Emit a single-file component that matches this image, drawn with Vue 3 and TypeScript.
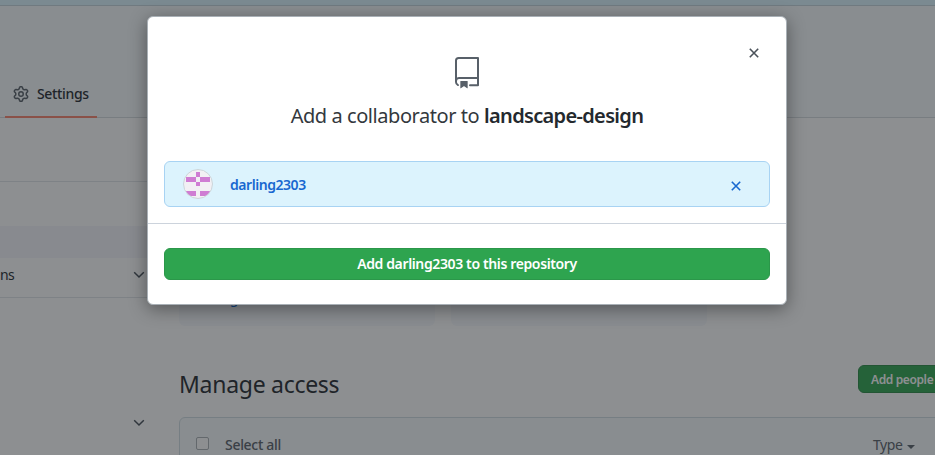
<script setup lang="ts">
interface Pixel {
  x: number
  y: number
  w: number
  h: number
}

const username = 'darling2303'
const repository = 'landscape-design'

const avatarPixels: Pixel[] = [
  { x: 13, y: 3, w: 4, h: 5 },
  { x: 3, y: 8, w: 10, h: 5 },
  { x: 17, y: 8, w: 10, h: 5 },
  { x: 13, y: 13, w: 4, h: 4 },
  { x: 3, y: 22, w: 10, h: 5 },
  { x: 17, y: 22, w: 10, h: 5 },
]
</script>

<template>
  <div class="page">
    <div class="notice"></div>
    <nav class="repo-nav">
      <a class="tab">
        <svg class="gear" viewBox="0 0 16 16" width="16" height="16">
          <path fill-rule="evenodd" d="M7.429 1.525a6.593 6.593 0 011.142 0c.036.003.108.036.137.146l.289 1.105c.147.56.55.967.997 1.189.174.086.341.183.501.29.417.278.97.423 1.53.27l1.102-.303c.11-.03.175.016.195.046.219.31.41.641.573.989.014.031.022.11-.059.19l-.815.806c-.411.406-.562.957-.53 1.456a4.588 4.588 0 010 .582c-.032.499.119 1.05.53 1.456l.815.806c.08.08.073.159.059.19a6.494 6.494 0 01-.573.99c-.02.029-.086.074-.195.045l-1.103-.303c-.559-.153-1.112-.008-1.529.27-.16.107-.327.204-.5.29-.449.222-.851.628-.998 1.189l-.289 1.105c-.029.11-.101.143-.137.146a6.613 6.613 0 01-1.142 0c-.036-.003-.108-.037-.137-.146l-.289-1.105c-.147-.56-.55-.967-.997-1.189a4.502 4.502 0 01-.501-.29c-.417-.278-.97-.423-1.53-.27l-1.102.303c-.11.03-.175-.016-.195-.046a6.492 6.492 0 01-.573-.989c-.014-.031-.022-.11.059-.19l.815-.806c.411-.406.562-.957.53-1.456a4.587 4.587 0 010-.582c.032-.499-.119-1.05-.53-1.456l-.815-.806c-.08-.08-.073-.159-.059-.19a6.44 6.44 0 01.573-.99c.02-.029.086-.075.195-.045l1.103.303c.559.153 1.112.008 1.529-.27.16-.107.327-.204.5-.29.449-.222.851-.628.998-1.189l.289-1.105c.029-.11.101-.143.137-.146zM8 0c-.236 0-.47.01-.701.03-.743.065-1.29.615-1.458 1.261l-.29 1.106c-.017.066-.078.158-.211.224a5.994 5.994 0 00-.668.386c-.123.082-.233.09-.3.071L3.27 2.776c-.644-.177-1.392.02-1.82.63a7.977 7.977 0 00-.704 1.217c-.315.675-.111 1.422.363 1.891l.815.806c.05.048.098.147.088.294a6.084 6.084 0 000 .772c.01.147-.038.246-.088.294l-.815.806c-.474.469-.678 1.216-.363 1.891.2.428.436.835.704 1.218.428.609 1.176.806 1.82.63l1.103-.303c.066-.019.176-.011.299.071.213.143.436.272.668.386.133.066.194.158.212.224l.289 1.106c.169.646.715 1.196 1.458 1.26a8.094 8.094 0 001.402 0c.743-.064 1.29-.614 1.458-1.26l.29-1.106c.017-.066.078-.158.211-.224a5.98 5.98 0 00.668-.386c.123-.082.233-.09.3-.071l1.102.302c.644.177 1.392-.02 1.82-.63.268-.382.505-.789.704-1.217.315-.675.111-1.422-.364-1.891l-.814-.806c-.05-.048-.098-.147-.088-.294a6.1 6.1 0 000-.772c-.01-.147.039-.246.088-.294l.814-.806c.475-.469.679-1.216.364-1.891a7.992 7.992 0 00-.704-1.218c-.428-.609-1.176-.806-1.82-.63l-1.103.303c-.066.019-.176.011-.299-.071a5.991 5.991 0 00-.668-.386c-.133-.066-.194-.158-.212-.224L10.16 1.29C9.99.645 9.444.095 8.701.031A8.094 8.094 0 008 0zm1.5 8a1.5 1.5 0 11-3 0 1.5 1.5 0 013 0zM11 8a3 3 0 11-6 0 3 3 0 016 0z" />
        </svg>
        <span>Settings</span>
      </a>
    </nav>

    <div class="columns">
      <aside class="sidebar">
        <div class="side-gap"></div>
        <div class="side-plain"></div>
        <div class="side-active"></div>
        <div class="side-row side-first">
          <span>ns</span>
          <svg class="chevron" viewBox="0 0 12 8" width="12" height="8"><path d="M1.2 1.2 6 6 10.8 1.2" /></svg>
        </div>
        <div class="side-row side-second">
          <svg class="chevron" viewBox="0 0 12 8" width="12" height="8"><path d="M1.2 1.2 6 6 10.8 1.2" /></svg>
        </div>
      </aside>

      <main class="content">
        <div class="cards">
          <div class="card"><span>Manage</span></div>
          <div class="card"></div>
        </div>
        <div class="heading">
          <h2><span>Manage access</span></h2>
          <button class="people"><span>Add people</span></button>
        </div>
        <div class="list-head">
          <i class="checkbox"></i>
          <span class="select-all">Select all</span>
          <span class="type">Type</span>
          <i class="caret"></i>
        </div>
      </main>
    </div>

    <div class="backdrop">
      <section class="dialog">
        <header class="dialog-head">
          <svg class="close" viewBox="0 0 10 10" width="10" height="10"><path d="M.8.8 9.2 9.2M9.2.8.8 9.2" /></svg>
          <svg class="repo" viewBox="0 0 24 24" width="32" height="32">
            <path fill-rule="evenodd" d="M3 2.75A2.75 2.75 0 015.75 0h14.5a.75.75 0 01.75.75v20.5a.75.75 0 01-.75.75h-6a.75.75 0 010-1.500h5.250v-4H6A1.500 1.500 0 004.500 18v.750c0 .716.430 1.334 1.050 1.605a.750.750 0 01-.600 1.374A3.250 3.250 0 013 18.750v-16zM19.500 1.500V15H6c-.546 0-1.059.146-1.500.401V2.750c0-.690.560-1.250 1.250-1.250H19.500z" />
            <path d="M7 18.250a.250.250 0 01.250-.250h5a.250.250 0 01.250.250v5.010a.250.250 0 01-.397.201l-2.206-1.604a.250.250 0 00-.294 0L7.397 23.460a.250.250 0 01-.397-.200v-5.010z" />
          </svg>
          <h1><span class="title-text">Add a collaborator to </span><strong>{{ repository }}</strong></h1>
        </header>
        <div class="member">
          <svg class="avatar" viewBox="0 0 30 30" width="30" height="30">
            <clipPath id="avatar-round"><circle cx="15" cy="15" r="14.500" /></clipPath>
            <circle cx="15" cy="15" r="14.500" fill="#f2f0f4" />
            <g clip-path="url(#avatar-round)" fill="#cf7dd3">
              <rect v-for="(p, i) in avatarPixels" :key="i" :x="p.x" :y="p.y" :width="p.w" :height="p.h" />
            </g>
            <circle cx="15" cy="15" r="14.500" fill="none" stroke="#cbd5da" />
          </svg>
          <span class="name">{{ username }}</span>
          <svg class="remove" viewBox="0 0 10 10" width="10" height="10"><path d="M.8.8 9.2 9.2M9.2.8.8 9.2" /></svg>
        </div>
        <footer class="dialog-foot">
          <button class="submit"><span>Add {{ username }} to this repository</span></button>
        </footer>
      </section>
    </div>
  </div>
</template>

<style>
body {
  overflow: hidden;
}
</style>

<style scoped>
* {
  box-sizing: border-box;
}
.page {
  position: relative;
  width: 935px;
  height: 455px;
  overflow: hidden;
  background: #fff;
  color: #24292e;
  font: 14px/20px "Noto Sans", sans-serif;
  display: flex;
  flex-direction: column;
}
span {
  white-space: nowrap;
}
.notice {
  height: 6px;
  flex: none;
  background: #dbf4ff;
  border-bottom: 1px solid #c4d4dc;
}
.repo-nav {
  height: 112px;
  flex: none;
  display: flex;
  align-items: flex-end;
  padding-left: 5px;
  background: #f6fafc;
  border-bottom: 1px solid #d5dade;
}
.tab {
  width: 92px;
  height: 46px;
  margin-bottom: -1px;
  padding: 0 0 0 8px;
  display: flex;
  align-items: center;
  gap: 8px;
  border-bottom: 2px solid #f9826c;
  font-weight: 500;
  letter-spacing: -0.35px;
}
.gear {
  fill: #586069;
}
.columns {
  flex: 1;
  display: flex;
  min-height: 0;
}
.sidebar {
  width: 155px;
  flex: none;
}
.side-gap {
  height: 64px;
  border-bottom: 1px solid #e1e4e8;
}
.side-plain {
  height: 44px;
}
.side-active {
  height: 32px;
  background: #f5f5fa;
}
.side-row {
  display: flex;
  align-items: center;
  padding-right: 10px;
}
.side-first {
  height: 40px;
  padding-bottom: 5px;
  border-bottom: 1px solid #e1e4e8;
}
.side-first span {
  letter-spacing: -0.6px;
}
.side-second {
  height: 249px;
}
.chevron {
  margin-left: auto;
  fill: none;
  stroke: #444d56;
  stroke-width: 1.5;
}
.content {
  width: 820px;
  flex: none;
  margin-left: 24px;
}
.cards {
  display: flex;
  gap: 16px;
  height: 208px;
}
.card {
  width: 256px;
  display: flex;
  align-items: flex-end;
  padding: 0 16px 18px;
  background: #f6f8fc;
  border-radius: 6px;
  color: #0366d6;
  letter-spacing: -0.6px;
}
.heading {
  height: 91px;
  display: flex;
  padding-top: 39px;
}
h2 {
  width: 679px;
  margin: -1px 0 0;
  font-size: 23px;
  line-height: 40px;
  font-weight: 400;
  letter-spacing: -0.28px;
}
.people {
  width: 110px;
  height: 28px;
  padding: 1px 0 0 12px;
  text-align: left;
  border: 1px solid #2a8a45;
  border-radius: 6px;
  background: #2ea44f;
  color: #fff;
  font: 600 12px/25px "Noto Sans", sans-serif;
  letter-spacing: -0.38px;
}
.list-head {
  height: 60px;
  display: flex;
  align-items: center;
  padding: 0 0 4px 16px;
  background: #f6fafc;
  border: 1px solid #d1dde3;
  border-radius: 6px 6px 0 0;
  color: #586069;
}
.checkbox {
  width: 13px;
  height: 13px;
  margin: -4px 16px 0 0;
  border: 1px solid #aab0b5;
  border-radius: 2px;
  background: #fff;
}
.select-all {
  width: 648px;
  font-weight: 500;
  letter-spacing: -0.3px;
}
.type {
  letter-spacing: -0.4px;
}
.caret {
  margin: 3px 0 0 4px;
  border: 4px solid transparent;
  border-top-color: #586069;
  border-bottom: 0;
}
.backdrop {
  position: absolute;
  inset: 0;
  padding: 16px 0 0 147px;
  background: rgba(27, 31, 35, 0.5);
}
.dialog {
  width: 640px;
  height: 289px;
  display: flex;
  flex-direction: column;
  background: #fff;
  border: 1px solid #a9b0b6;
  border-radius: 6px;
  box-shadow: 0 4px 18px rgba(0, 0, 0, 0.4);
}
.dialog-head {
  position: relative;
  height: 144px;
  flex: none;
  padding-top: 40px;
  display: flex;
  flex-direction: column;
  align-items: center;
}
.close {
  position: absolute;
  top: 31px;
  right: 27px;
  stroke: #4b525a;
  stroke-width: 1.6;
}
.repo {
  fill: #586069;
}
h1 {
  margin: 12px 0 0;
  font-size: 20px;
  line-height: 30px;
  font-weight: 400;
  white-space: nowrap;
}
.title-text {
  white-space: pre;
  color: #33383d;
  letter-spacing: -0.44px;
}
strong {
  font-weight: 600;
  letter-spacing: -0.66px;
}
.member {
  height: 46px;
  flex: none;
  margin: 0 16px;
  padding: 0 28px 0 18px;
  display: flex;
  align-items: center;
  background: #dcf3fd;
  border: 1px solid #a8d3f3;
  border-radius: 6px;
}
.avatar {
  margin-right: 17px;
}
.name {
  margin-top: 2px;
  color: #1868d0;
  font-weight: 600;
  letter-spacing: -0.45px;
}
.remove {
  margin: 4px 0 0 auto;
  stroke: #1868d0;
  stroke-width: 1.6;
}
.dialog-foot {
  flex: 1;
  margin-top: 16px;
  padding: 24px 16px 0;
  border-top: 1px solid #ccd3dc;
}
.submit {
  display: block;
  width: 606px;
  height: 32px;
  padding: 0;
  border: 1px solid #2b974a;
  border-radius: 6px;
  background: #2ea44f;
  color: #fff;
  font: 600 14px/30px "Noto Sans", sans-serif;
  letter-spacing: -0.37px;
}
</style>
